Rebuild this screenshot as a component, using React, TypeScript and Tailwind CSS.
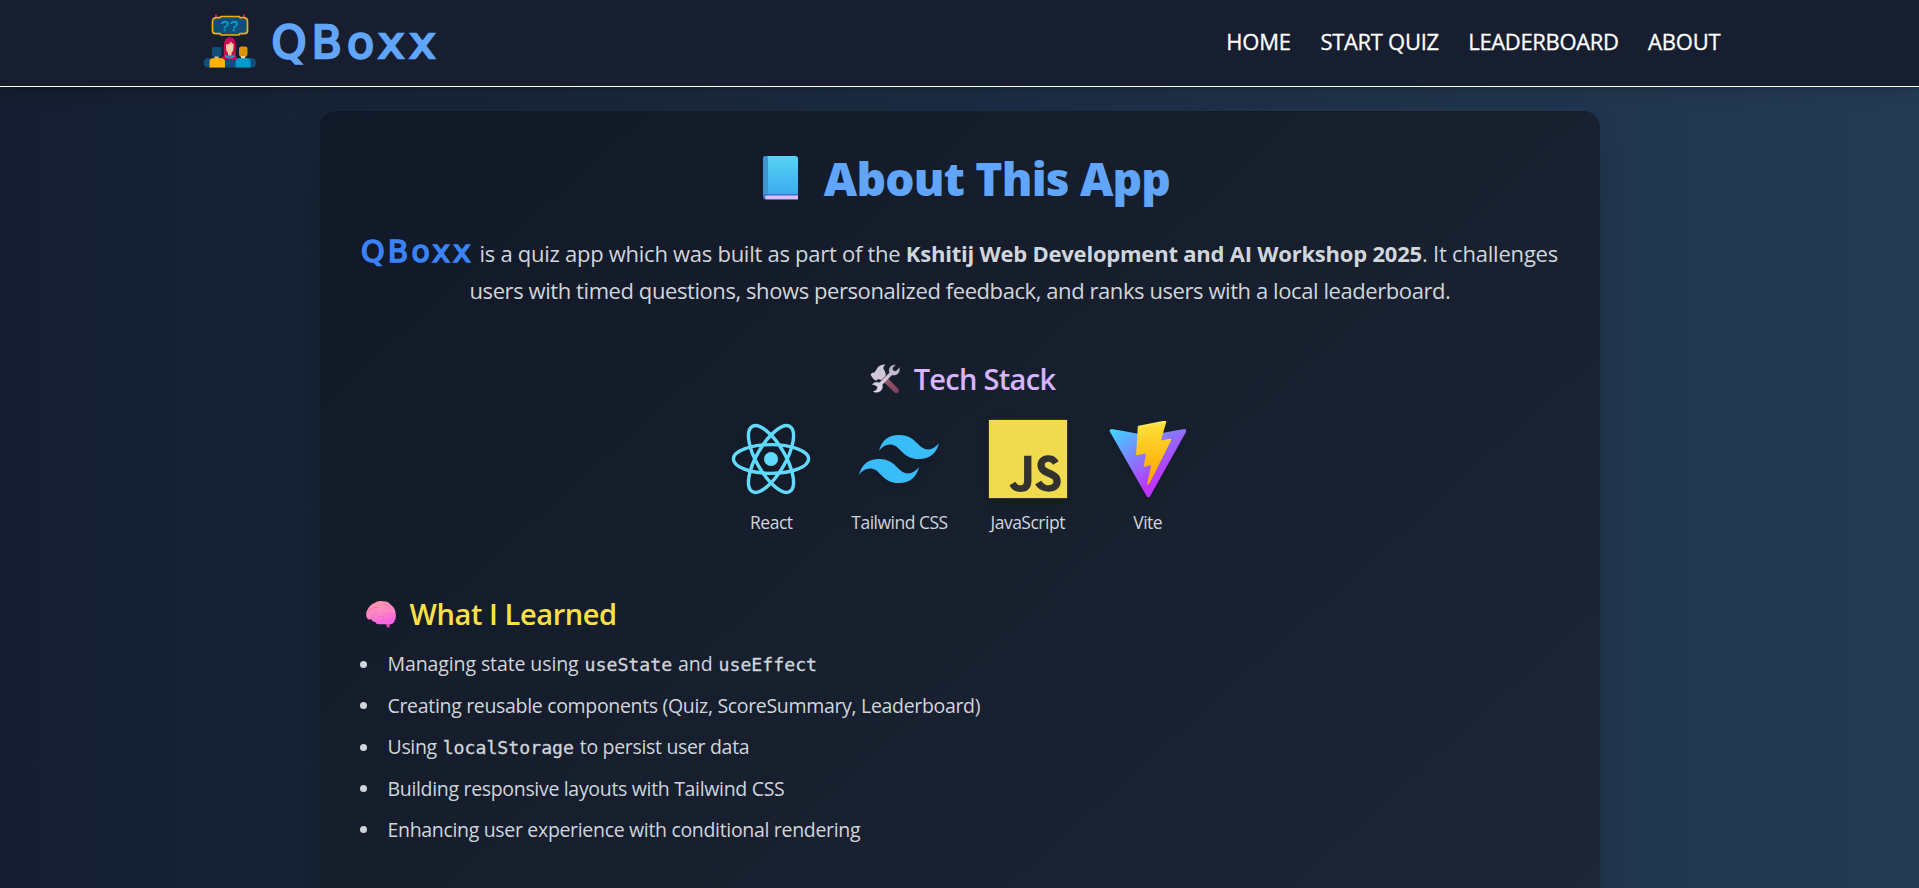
import type { ReactNode } from "react";
import { SiJavascript } from "react-icons/si";

function Logo() {
  return (
    <svg viewBox="0 0 56 56" className="-mt-0.5 size-14" aria-hidden="true">
      <path d="M14 1.5v4M42 1.5v4" stroke="#d4145a" strokeWidth="2" />
      <path
        d="M15 4.7h3l1-1.2h18l1 1.2h3.5q4 0 4 4v9q0 3-3.500 3h-4l-1.200 1.300h-17.600l-1.200-1.300h-4q-3.500 0-3.500-3v-9q0-4 4.500-4z"
        fill="#0f4e78"
        stroke="#f5ab0c"
        strokeWidth="1.7"
      />
      <text x="28" y="18" textAnchor="middle" fontSize="15" letterSpacing="0.8" fill="#0aa0d2" stroke="#0aa0d2" strokeWidth="0.3" fontFamily="Liberation Sans, sans-serif">
        ??
      </text>
      <rect x="1.700" y="45" width="52.300" height="9.600" rx="4.200" fill="#0f4e78" />
      <path d="M21 45.500c1-1.500 1.500-3 1.500-5.500v-6q0-10 6-10t6 10v6c0 2.500.5 4 1.500 5.500v0h-1q1.500 1 1.500 3v0q0 -3.500-.5-2.500H19.500q0-1.500 1.500-2z" fill="#cb0a52" transform="translate(-.7 0)" />
      <path d="M24 31.500q4 0 5-3 1 2 2.500 2.500v4q0 3.500-2 4.500v3h-3.500v-3q-2-1-2-4.500z" fill="#f8cfa8" />
      <path d="M23.500 41.500q4 4 8.500 0l1 1.500q-5 5-10.500 0z" fill="#0aa0c8" />
      <path d="M10 36q0-2 2-2h5.500q2 0 2 2v5q0 3-2 3.500v1.500h-5v-1.500q-2.500-.5-2.500-3.500z" fill="#0f4e78" />
      <rect x="12.500" y="43.500" width="4" height="3" fill="#e3b692" />
      <path d="M7.500 54.600V49q0-3.700 4-3.700h7.500q4 0 4 3.700v5.600z" fill="#ffb400" />
      <path d="M37 36q0-2.500 2-2.500h4.500q2 0 2 2v5.500q0 2.500-2.300 3v2h-4v-2q-2.200-.5-2.200-3z" fill="#d99400" />
      <rect x="39" y="43" width="4" height="3" fill="#f8cfa8" />
      <path d="M33.600 54.600V49q0-3.700 4-3.700h7q4 0 4 3.700v5.600z" fill="#009bca" />
    </svg>
  );
}

function BookIcon() {
  return (
    <svg viewBox="0 0 35 44" className="h-11 w-[35px]" aria-hidden="true">
      <defs>
        <linearGradient id="book-cover" x1="0" y1="0" x2="0" y2="1">
          <stop offset="0" stopColor="#57d3f3" />
          <stop offset="1" stopColor="#3cabf0" />
        </linearGradient>
      </defs>
      <path d="M3 0h29q3 0 3 3v41H4q-4 0-4-4V3q0-3 3-3z" fill="#3b6fd6" />
      <path d="M3.500 39.500H35V43H3.500Q2 43 2 41.300t1.500-1.800z" fill="#dcbdea" />
      <path d="M3 0h29q3 0 3 3v35H5V0z" fill="url(#book-cover)" />
      <path d="M3 0h2v38H3q-2 0-3 1.500V3q0-3 3-3z" fill="#4195cf" />
    </svg>
  );
}

function ToolsIcon() {
  return (
    <svg viewBox="0 0 30 30" className="size-[30px]" aria-hidden="true">
      <defs>
        <linearGradient id="tool-handle" x1="0" y1="0" x2="1" y2="1">
          <stop offset="0" stopColor="#a5695a" />
          <stop offset="1" stopColor="#7b3a66" />
        </linearGradient>
        <linearGradient id="tool-steel" x1="0" y1="0" x2="0" y2="1">
          <stop offset="0" stopColor="#b9b3c0" />
          <stop offset="1" stopColor="#e4d9ee" />
        </linearGradient>
      </defs>
      <path d="M9.500 14l4-4 15 15q1.300 2-.3 3.600-1.900 1.300-3.600 0z" fill="url(#tool-handle)" />
      <path d="M.5 10.500L2.500 8.500 3.500 9Q6 7 7 4.500 9 .5 15.500.5q-2.500 2-2 4.500l1.500 2.500 1 3.500-5 5-3-1-1.500 1.500q-3 0-6-6z" fill="#cfc6d8" />
      <path d="M25.500 1q-5-.5-6.300 4-.5 2 .2 3.800L9.500 18.500q-4.500-1.500-7.500 2l3 .8 2.500 1.700-1 3-3.500 1.500q3 2 6.500.3 4-2.300 3-7.300l9.500-9.500q5 1 7-3 1-2 .5-4.500L26 7.200l-3-.7-.5-2.500z" fill="url(#tool-steel)" stroke="#8f8598" strokeWidth="0.3" />
    </svg>
  );
}

function BrainIcon() {
  return (
    <svg viewBox="0 0 30 27" className="h-[27px] w-[30px]" aria-hidden="true">
      <defs>
        <linearGradient id="brain" x1="0" y1="0" x2="0.300" y2="1">
          <stop offset="0" stopColor="#ff9aa5" />
          <stop offset="0.600" stopColor="#fd86c6" />
          <stop offset="1" stopColor="#f963e6" />
        </linearGradient>
      </defs>
      <path d="M19.500 21l1.500 5.500h2.500L24.500 21z" fill="#dd3fb4" />
      <path d="M1 17Q-.8 12.500 1.500 8.500 4 3.500 8.500 2 12-.5 16.500.3q5-.3 8 3.200 4.500 3 5 8 1 5.500-1 8.500-1.500 3.500-5 3.300H13q-3 0-4-2.500Q6 21 5.500 18 2.500 19.500 1 17z" fill="url(#brain)" />
      <path d="M2.500 10Q8 5 12 6.500M5.500 18q0-3 2.500-4t2.500-3.500M12 15q4 2.500 7-.5 1.500-2.500 5-2.500M16 19.500q4 1 7-1.500t5.500-1.500M18 3q5 .5 6.500 4.500" fill="none" stroke="#ee6fb6" strokeWidth="0.8" strokeLinecap="round" />
    </svg>
  );
}

function ReactLogo() {
  return (
    <svg viewBox="-11.7 -11.7 23.4 23.4" className="size-20 drop-shadow-lg">
      <circle r="2.05" fill="#61dafb" />
      <g stroke="#61dafb" fill="none">
        <ellipse rx="11" ry="4.2" />
        <ellipse rx="11" ry="4.2" transform="rotate(60)" />
        <ellipse rx="11" ry="4.2" transform="rotate(120)" />
      </g>
    </svg>
  );
}

function TailwindLogo() {
  return (
    <svg viewBox="0 0 54 32.4" className="size-20 drop-shadow-lg">
      <path
        fill="#38bdf8"
        fillRule="evenodd"
        d="M27 0c-7.2 0-11.7 3.6-13.5 10.8 2.7-3.6 5.85-4.95 9.45-4.05 2.054.513 3.522 2.004 5.147 3.653C30.744 13.09 33.808 16.2 40.5 16.2c7.2 0 11.7-3.6 13.5-10.8-2.7 3.6-5.85 4.95-9.45 4.05-2.054-.513-3.522-2.004-5.147-3.653C36.756 3.11 33.692 0 27 0zM13.5 16.2C6.3 16.2 1.8 19.8 0 27c2.7-3.6 5.85-4.95 9.45-4.05 2.054.514 3.522 2.004 5.147 3.653C17.244 29.29 20.308 32.4 27 32.4c7.2 0 11.7-3.6 13.5-10.8-2.7 3.6-5.85 4.95-9.45 4.05-2.054-.513-3.522-2.004-5.147-3.653C23.256 19.31 20.192 16.2 13.5 16.2z"
      />
    </svg>
  );
}

function JavaScriptLogo() {
  return (
    <div className="size-20 bg-[#323330] p-px drop-shadow-lg">
      <SiJavascript className="size-full text-[#f0db4f]" />
    </div>
  );
}

function ViteLogo() {
  return (
    <svg viewBox="0 0 256 257" className="size-20 p-[1.5px] drop-shadow-lg">
      <defs>
        <linearGradient id="vite-shield" x1="-.828%" x2="57.636%" y1="7.652%" y2="78.411%">
          <stop offset="0%" stopColor="#41D1FF" />
          <stop offset="100%" stopColor="#BD34FE" />
        </linearGradient>
        <linearGradient id="vite-bolt" x1="43.376%" x2="50.316%" y1="2.242%" y2="89.03%">
          <stop offset="0%" stopColor="#FFEA83" />
          <stop offset="8.333%" stopColor="#FFDD35" />
          <stop offset="100%" stopColor="#FFA800" />
        </linearGradient>
      </defs>
      <path
        fill="url(#vite-shield)"
        d="M255.153 37.938L134.897 252.976c-2.483 4.44-8.862 4.466-11.382.048L.875 37.958c-2.746-4.814 1.371-10.646 6.827-9.67l120.385 21.517a6.537 6.537 0 0 0 2.322-.004l117.867-21.483c5.438-.991 9.574 4.796 6.877 9.62Z"
      />
      <path
        fill="url(#vite-bolt)"
        d="M185.432.063L96.44 17.501a3.268 3.268 0 0 0-2.634 3.014l-5.474 92.456a3.268 3.268 0 0 0 3.997 3.378l24.777-5.718c2.318-.535 4.413 1.507 3.936 3.838l-7.361 36.047c-.495 2.426 1.782 4.5 4.151 3.78l15.304-4.649c2.372-.72 4.652 1.36 4.15 3.788l-11.698 56.621c-.732 3.542 3.979 5.473 5.943 2.437l1.313-2.028l72.516-144.72c1.215-2.423-.88-5.186-3.54-4.672l-25.505 4.922c-2.396.462-4.435-1.77-3.759-4.114l16.646-57.705c.677-2.35-1.37-4.583-3.769-4.113Z"
      />
    </svg>
  );
}

function Tech({ label, children }: { label: string; children: ReactNode }) {
  return (
    <div className="flex flex-col items-center">
      {children}
      <p className="mt-[9px] text-[17.5px] leading-7 tracking-[-0.5px] text-gray-300">{label}</p>
    </div>
  );
}

function Code({ children }: { children: ReactNode }) {
  return <code className="mx-px font-['DejaVu_Sans_Mono',monospace] text-[18.2px] tracking-normal [-webkit-text-stroke:0.3px_#d1d5dc]">{children}</code>;
}

export default function App() {
  return (
    <div className="flex h-[888px] flex-col overflow-hidden bg-linear-to-r/srgb from-[#141e30] to-[#243b55] font-['Open_Sans',sans-serif]">
      <header className="relative z-10 h-[87px] shrink-0 border-b border-white bg-[#161e30] shadow-lg">
        <div className="mx-auto flex h-[83px] max-w-[1536px] items-center justify-between pr-[7px] pl-2.5">
          <div className="flex items-center gap-3.5">
            <Logo />
            <span className="mt-[3px] font-['DejaVu_Sans',sans-serif] text-[44.5px] leading-none tracking-[5px] text-[#60a5fa] [-webkit-text-stroke:2.4px_#60a5fa]">QBoxx</span>
          </div>
          <nav className="flex gap-[29.5px] text-[22px] font-medium text-white [-webkit-text-stroke:0.3px_#ffffff]">
            <a className="tracking-[-0.2px]">HOME</a>
            <a className="tracking-[-0.3px]">START QUIZ</a>
            <a className="tracking-[-0.35px]">LEADERBOARD</a>
            <a className="tracking-[-0.2px]">ABOUT</a>
          </nav>
        </div>
      </header>

      <main className="flex justify-center pt-6">
        <section className="h-[1150px] w-[1280px] shrink-0 rounded-2xl bg-linear-to-br/srgb from-[#111827] to-[#1f2937] px-10 pt-[39px] text-gray-300 shadow-2xl">
          <h1 className="flex h-14 items-center justify-center gap-[26px] pl-3.5 text-[46px] leading-[56px] font-extrabold tracking-[-0.8px] text-[#60a5fa]">
            <BookIcon />
            About This App
          </h1>

          <p className="mt-[29px] text-center text-[22px] leading-[37px] whitespace-nowrap">
            <span className="font-['DejaVu_Sans',sans-serif] text-[30px] leading-none tracking-[3.2px] text-[#3b82f6] [-webkit-text-stroke:1.6px_#3b82f6]">QBoxx</span>
            <span className="tracking-[-0.27px]"> is a quiz app which was built as part of the </span>
            <strong className="font-bold tracking-[-0.22px]">Kshitij Web Development and AI Workshop 2025</strong>
            <span className="tracking-[-0.2px]">. It challenges</span>
            <br />
            <span className="pl-px tracking-[-0.42px]">users with timed questions, shows personalized feedback, and ranks users with a local leaderboard.</span>
          </p>

          <h2 className="mt-[50px] flex items-center justify-center gap-3.5 pl-1.5 text-[29px] leading-10 font-semibold tracking-[-0.7px] text-[#d8b4fe]">
            <ToolsIcon />
            Tech Stack
          </h2>
          <div className="mt-5 flex justify-center gap-10">
            <Tech label="React"><ReactLogo /></Tech>
            <Tech label="Tailwind CSS"><TailwindLogo /></Tech>
            <Tech label="JavaScript"><JavaScriptLogo /></Tech>
            <Tech label="Vite"><ViteLogo /></Tech>
          </div>

          <h2 className="mt-[58px] flex items-center gap-3.5 pl-1.5 text-[29px] leading-10 font-semibold tracking-[-0.42px] text-[#fde047]">
            <BrainIcon />
            What I Learned
          </h2>
          <ul className="mt-[9px] text-[19.5px] leading-[41px] tracking-[-0.32px] [&>li]:flex [&>li]:items-center [&>li]:gap-[21px] [&>li]:before:size-[7px] [&>li]:before:rounded-full [&>li]:before:bg-gray-300 [&>li]:before:content-['']">
            <li className="tracking-[-0.1px]"><span>Managing state using <Code>useState</Code> and <Code>useEffect</Code></span></li>
            <li><span>Creating reusable components (Quiz, ScoreSummary, Leaderboard)</span></li>
            <li><span>Using <Code>localStorage</Code> to persist user data</span></li>
            <li><span>Building responsive layouts with Tailwind CSS</span></li>
            <li><span>Enhancing user experience with conditional rendering</span></li>
          </ul>
        </section>
      </main>
    </div>
  );
}
